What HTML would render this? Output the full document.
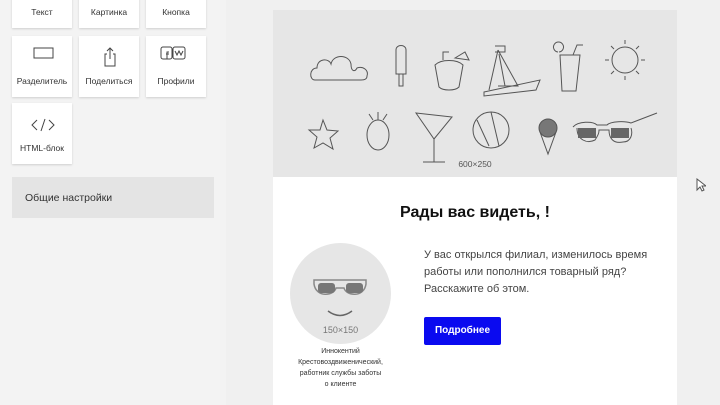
<!DOCTYPE html>
<html><head><meta charset="utf-8"><style>
*{margin:0;padding:0;box-sizing:border-box}
body{width:720px;height:405px;overflow:hidden;background:#f0f0f0;font-family:"Liberation Sans",sans-serif;position:relative}
.left{position:absolute;left:0;top:0;width:226px;height:405px;background:#f3f3f3}
.tile{position:absolute;width:60px;height:61px;background:#fff;box-shadow:0 1px 2px rgba(0,0,0,.15);font-size:8.5px;color:#333;text-align:center}
.tile .lb{position:absolute;left:0;right:0;top:40px}
.tile svg{position:absolute;left:20px;top:10px}
.set{position:absolute;left:12px;top:177px;width:202px;height:41px;background:#e4e4e4;font-size:10.5px;color:#333;padding:15px 0 0 13px}
.mail{position:absolute;left:273px;top:10px;width:404px;height:395px;background:#fff}
.hero{position:absolute;left:0;top:0;width:404px;height:167px;background:#e6e6e6}
.hero svg{position:absolute;left:0;top:0}
.h1{position:absolute;left:0;width:404px;top:204px;text-align:center;font-weight:bold;font-size:16px;color:#111}
.circ{position:absolute;left:290px;top:243px;width:101px;height:101px;border-radius:50%;background:#e6e6e6}
.cap{position:absolute;left:283px;top:346px;width:115px;text-align:center;font-size:7px;line-height:11px;color:#333}
.txt{position:absolute;left:424px;top:247px;font-size:11px;line-height:17px;color:#444;width:240px}
.btn{position:absolute;left:424px;top:317px;width:77px;height:28px;background:#0a0af0;border-radius:2px;color:#fff;font-weight:bold;font-size:10px;text-align:center;line-height:28px}
</style></head><body>
<div class="left">
 <div class="tile" style="left:12px;top:-33px"><div class="lb">Текст</div></div>
 <div class="tile" style="left:79px;top:-33px"><div class="lb">Картинка</div></div>
 <div class="tile" style="left:146px;top:-33px"><div class="lb">Кнопка</div></div>
 <div class="tile" style="left:12px;top:36px"><svg width="22" height="14"><path d="M2 2h19v10H2z M10 12h3" fill="none" stroke="#444" stroke-width="1"/></svg><div class="lb">Разделитель</div></div>
 <div class="tile" style="left:79px;top:36px"><svg width="22" height="22"><path d="M8 8H6v12h10V8h-2M11 2v11M8 5l3-3 3 3" fill="none" stroke="#444"/></svg><div class="lb">Поделиться</div></div>
 <div class="tile" style="left:146px;top:36px"><svg width="26" height="18" style="left:14px"><rect x="1" y="1" width="11" height="12" rx="2" fill="none" stroke="#444"/><rect x="13" y="1" width="12" height="12" rx="2" fill="none" stroke="#444"/><path d="M7 13V6h2M6 8h3M15 5l2 4 2-4 2 4 2-4" fill="none" stroke="#444"/></svg><div class="lb">Профили</div></div>
 <div class="tile" style="left:12px;top:103px"><svg width="24" height="14" style="left:19px;top:15px"><path d="M6 2L1 7l5 5M18 2l5 5-5 5M14 1L10 13" fill="none" stroke="#444"/></svg><div class="lb" style="top:40px">HTML-блок</div></div>
 <div class="set">Общие настройки</div>
</div>
<div class="mail">
 <div class="hero"><svg width="404" height="167" fill="none" stroke="#555" stroke-width="1">
  <path d="M42 70c-6 0-6-12 2-12 0-10 12-10 14-4 2-10 18-10 20 0 0 8 4 8 6 4 6-2 12 2 10 8 0 4-4 4-6 4z"/>
  <path d="M123 40c0-6 10-6 10 0v24h-10z M126 64v12h4v-12"/>
  <path d="M162 55c6-6 22-6 28 0l-4 22c-4 4-16 4-20 0z M170 50v-8h6 M182 48l10-6 4 8z"/>
  <path d="M225 40l-9 40 M225 40l20 36h-20 M226 44l6 32 M222 36h10v6h-10 M211 82l56-12-4 10-52 6z"/>
  <path d="M287 45h20l-4 36h-14z M300 45l4-10h6 M285 42a5 5 0 1 1 1 0"/>
  <circle cx="352" cy="50" r="13"/><path d="M352 30v4M352 66v4M332 50h4M368 50h4M338 36l3 3M363 61l3 3M366 36l-3 3M338 64l3-3"/>
  <path d="M50 110l4 10 11 1-8 7 3 11-10-6-9 5 3-11-8-7 11 0z"/>
  <ellipse cx="105" cy="125" rx="11" ry="15"/><path d="M100 110l-4-6M105 110v-8M110 110l4-6"/>
  <path d="M143 103l36 4-18 22z M161 129v23M150 152l22 0"/>
  <circle cx="218" cy="120" r="18"/><path d="M204 110l12 26 M218 102l8 34" />
  <circle cx="275" cy="118" r="9" fill="#777"/><path d="M267 122l8 22 8-22"/>
  <path d="M300 117c5-6 20-6 24-2h10c4-4 18-4 24-2l26-10 M304 118c0 12 10 16 18 12 4-6 4-8 4-10h10c0 8 4 14 14 12 8 0 10-8 8-14"/>
  <rect x="305" y="118" width="18" height="10" fill="#666" stroke="none"/><rect x="338" y="118" width="18" height="10" fill="#666" stroke="none"/>
 </svg>
 <div style="position:absolute;left:0;width:404px;top:149px;text-align:center;font-size:8.5px;color:#555">600×250</div></div>
</div>
<div class="h1" style="left:273px">Рады вас видеть, !</div>
<div class="circ"><svg width="101" height="101"><path d="M24 37h52v4c-2 14-20 12-22 4h-8c-2 8-20 10-22-4z" fill="none" stroke="#888" stroke-width="1.5"/><rect x="28" y="40" width="17" height="10" rx="3" fill="#777"/><rect x="56" y="40" width="17" height="10" rx="3" fill="#777"/><path d="M38 68c8 6 16 6 24 0" fill="none" stroke="#666" stroke-width="1.5"/></svg><div style="position:absolute;left:0;right:0;top:82px;text-align:center;font-size:9px;color:#777">150×150</div></div>
<div class="cap">Иннокентий<br>Крестовоздвиженический,<br>работник службы заботы<br>о клиенте</div>
<div class="txt">У вас открылся филиал, изменилось время работы или пополнился товарный ряд? Расскажите об этом.</div>
<div class="btn">Подробнее</div>
<svg style="position:absolute;left:696px;top:178px" width="10" height="14"><path d="M1 1v11l3-3 2 4 2-1-2-4h4z" fill="#fff" stroke="#555"/></svg>
</body></html>
